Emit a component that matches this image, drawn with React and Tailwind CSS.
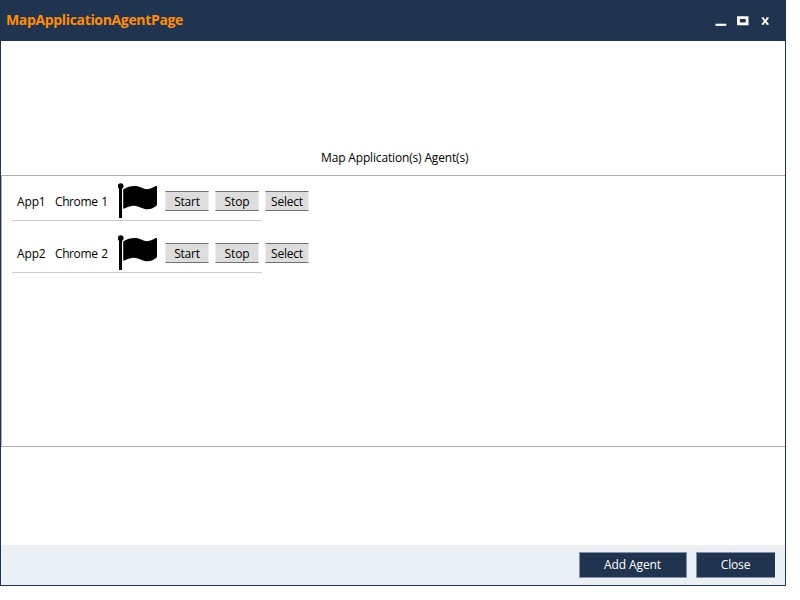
const agents = [
  { app: 'App1', name: 'Chrome 1' },
  { app: 'App2', name: 'Chrome 2' },
];

function Flag() {
  return (
    <svg width="40" height="36" viewBox="0 0 40 36" className="shrink-0">
      <circle cx="2.7" cy="3.1" r="2.9" />
      <path d="M1 4h3v31H1z" />
      <path d="M5.2 6.4C9 4 13.5 2.8 18 3.1C23 3.5 25 6.1 29 6.3C32.5 6.3 35.5 4.3 37.6 3.1Q39 2.6 39 3.7V21.6Q39 22.6 37.8 23.2C34.5 25.5 30.5 27.1 26 25.7C21.5 24.1 18 22.3 13.5 22.9C11 23.3 8.6 24.4 6.4 25.5Q5.2 26 5.2 24.9Z" />
    </svg>
  );
}

function RowButton({ children, spacing }) {
  return (
    <button className={`flex h-5 w-11 shrink-0 items-center justify-center whitespace-nowrap border-x border-y border-x-[#eeeeee] border-y-[#707070] bg-[#dddddd] pt-[2px] ${spacing}`}>
      {children}
    </button>
  );
}

function AgentRow({ app, name }) {
  return (
    <div className="h-[52px] w-[250px] border-b border-[#cccccc]">
      <div className="flex h-full items-start pt-[14px]">
        <span className="mt-[11px] w-[43px] shrink-0 pl-[5px] tracking-[-0.15px]">{app}</span>
        <span className="mt-[11px] w-[63px] shrink-0 whitespace-nowrap tracking-[-0.4px] [word-spacing:1px]">{name}</span>
        <Flag />
        <div className="ml-[7px] mt-2 flex gap-1.5">
          <RowButton spacing="tracking-[-0.2px]">Start</RowButton>
          <RowButton spacing="tracking-[-0.1px]">Stop</RowButton>
          <RowButton spacing="tracking-[-0.2px]">Select</RowButton>
        </div>
      </div>
    </div>
  );
}

export default function App() {
  return (
    <div className="h-[600px] w-[800px] overflow-hidden bg-white font-['Open_Sans','Noto_Sans',sans-serif] text-[12px] leading-4 text-black">
      <div className="flex h-[586px] w-[786px] flex-col border border-[#21344f]">
        <header className="flex h-10 shrink-0 items-center justify-between bg-[#21344f] pl-[5px] pr-[15px]">
          <h1 className="-mt-[2px] text-[14px] font-bold tracking-[-0.34px] text-[#ff8c0a]">MapApplicationAgentPage</h1>
          <svg width="56" height="12" viewBox="0 0 56 12" fill="none" className="-mt-px">
            <path d="M1.5 8.7h10.8v2.2H1.5z" fill="#fff" />
            <path d="M24.5 2.6h8.6v6.2h-8.6z" stroke="#fff" strokeWidth="2.8" />
            <path d="M48.6 3.1l5.2 6M53.8 3.1l-5.2 6" stroke="#fff" strokeWidth="1.8" />
            <path d="M47.5 2.9h2.6M52.3 2.9h2.6M47.5 9.2h2.6M52.3 9.2h2.6" stroke="#fff" strokeWidth="0.9" />
          </svg>
        </header>
        <main className="flex flex-1 flex-col">
          <h2 className="mt-[109px] pl-[320px] tracking-[-0.16px]">Map Application(s) Agent(s)</h2>
          <section className="mt-[9px] h-[272px] border-y border-l border-[#abadb3] pl-[10px]">
            <div className="-mt-[7px]">
              {agents.map((agent) => (
                <AgentRow key={agent.app} {...agent} />
              ))}
            </div>
          </section>
        </main>
        <footer className="flex h-10 shrink-0 justify-end gap-[9px] bg-[#ebf0f4] pr-[10px] pt-[7px] text-white">
          <button className="flex h-[26px] w-[108px] items-center justify-center border border-[#8291a8] bg-[#21344f] pr-px tracking-[-0.1px]">Add Agent</button>
          <button className="flex h-[26px] w-[79px] items-center justify-center border border-r-0 border-[#8291a8] bg-[#21344f] pr-px tracking-[-0.15px]">Close</button>
        </footer>
      </div>
    </div>
  );
}
